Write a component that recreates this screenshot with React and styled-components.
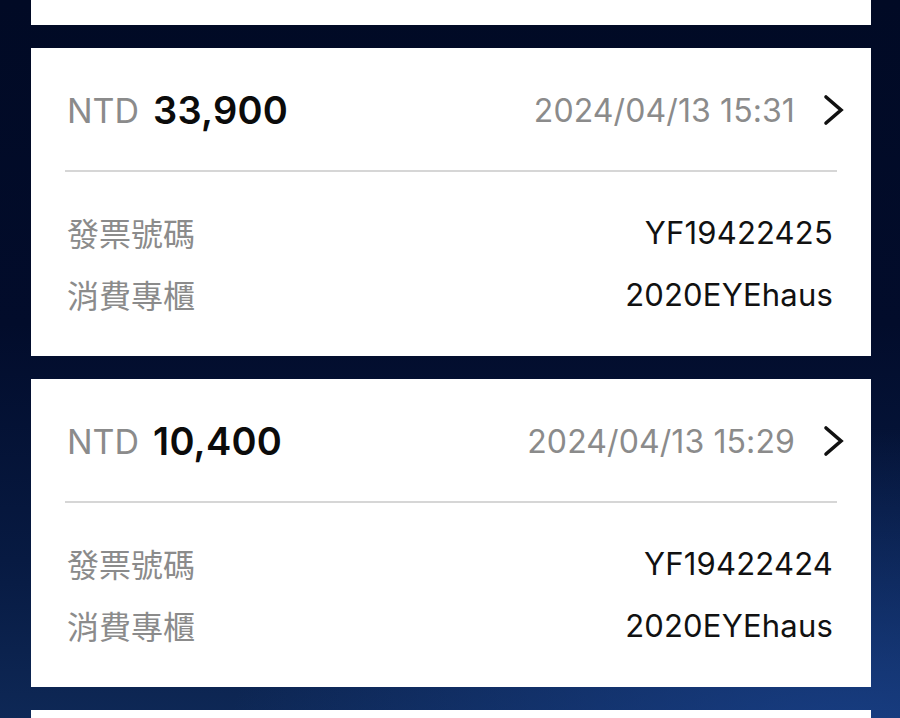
import React from 'react';
import styled, { createGlobalStyle } from 'styled-components';

const records = [
  { id: 'YF19422425', amount: '33,900', time: '2024/04/13 15:31', counter: '2020EYEhaus' },
  { id: 'YF19422424', amount: '10,400', time: '2024/04/13 15:29', counter: '2020EYEhaus' },
];

const GlobalStyle = createGlobalStyle`
  html, body {
    margin: 0;
    padding: 0;
    background: #020a26;
  }
  body {
    font-family: Inter, "Noto Sans CJK TC", "Noto Sans", sans-serif;
  }
`;

const Screen = styled.div`
  width: 900px;
  height: 718px;
  overflow: hidden;
  background:
    radial-gradient(ellipse 70% 45% at 95% 105%, rgba(26, 66, 140, 0.85), rgba(26, 66, 140, 0) 100%),
    linear-gradient(to bottom, #010a25 0%, #020c2b 45%, #071a42 78%, #0e2856 100%);
`;

const List = styled.div`
  display: flex;
  flex-direction: column;
  gap: 23px;
  padding: 0 29px 0 31px;
`;

// edge of a card scrolled past the top or bottom of the list
const CardEdge = styled.div`
  background: #fff;
  height: ${props => props.$height}px;
  flex-shrink: 0;
`;

const Card = styled.div`
  background: #fff;
  height: 308px;
  padding: 0 34px;
  box-sizing: border-box;
  display: flex;
  flex-direction: column;
  flex-shrink: 0;
`;

const Header = styled.div`
  height: 124px;
  display: flex;
  align-items: center;
  border-bottom: 2px solid #d6d6d6;
  box-sizing: border-box;
  padding-top: 2px;
`;

const Currency = styled.span`
  font-size: 34px;
  font-weight: 400;
  color: #8b8b8b;
  margin-left: 2px;
  margin-right: 14px;
`;

const Amount = styled.span`
  font-size: 38px;
  font-weight: 600;
  color: #0b0b0b;
  letter-spacing: 0.2px;
`;

const Time = styled.span`
  margin-left: auto;
  font-size: 32px;
  color: #8b8b8b;
  letter-spacing: 0.1px;
`;

const Chevron = styled.svg`
  width: 22px;
  height: 32px;
  margin-left: 28px;
  margin-right: -8px;
  flex-shrink: 0;
`;

const Rows = styled.div`
  display: flex;
  flex-direction: column;
  padding-top: 40px;
  gap: 22px;
`;

const Row = styled.div`
  display: flex;
  justify-content: space-between;
  align-items: center;
  height: 40px;
`;

const Label = styled.span`
  font-size: 32px;
  color: #8b8b8b;
  margin-left: 2px;
`;

const Value = styled.span`
  font-size: 31px;
  color: #111;
  letter-spacing: 0.2px;
  margin-right: 4px;
`;

const Record = ({ record }) => (
  <Card>
    <Header>
      <Currency>NTD</Currency>
      <Amount>{record.amount}</Amount>
      <Time>{record.time}</Time>
      <Chevron viewBox="0 0 22 32">
        <path d="M3 3 L18 16 L3 29" fill="none" stroke="#111" strokeWidth="3.6" strokeLinecap="round" strokeLinejoin="miter" />
      </Chevron>
    </Header>
    <Rows>
      <Row>
        <Label>發票號碼</Label>
        <Value>{record.id}</Value>
      </Row>
      <Row>
        <Label>消費專櫃</Label>
        <Value>{record.counter}</Value>
      </Row>
    </Rows>
  </Card>
);

const App = () => (
  <>
    <GlobalStyle />
    <Screen>
      <List>
        <CardEdge $height={25} />
        {records.map(r => <Record key={r.id} record={r} />)}
        <CardEdge $height={40} />
      </List>
    </Screen>
  </>
);

export default App;
